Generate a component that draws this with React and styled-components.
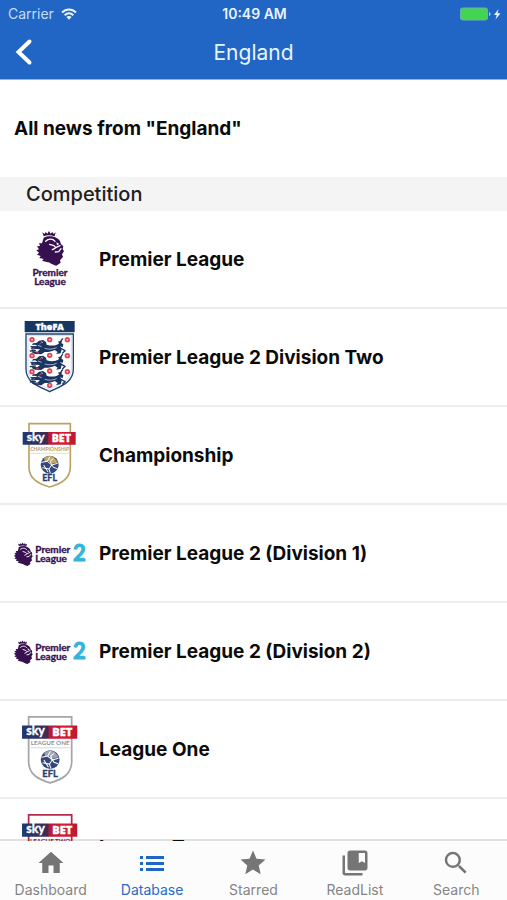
import React from "react";
import styled, { createGlobalStyle } from "styled-components";
import { MdHome, MdStar, MdCollectionsBookmark, MdSearch } from "react-icons/md";

const GlobalStyle = createGlobalStyle`
  * { box-sizing: border-box; }
  body { margin: 0; background: #fff; font-family: Inter, "Liberation Sans", sans-serif; }
`;

const Screen = styled.div`
  display: flex;
  flex-direction: column;
  height: 100vh;
  overflow: hidden;
  background: #fff;
`;

const Header = styled.header`
  flex: none;
  color: #e9f3ff;
  background: #2166c4;
  border-bottom: 1px solid #8fb6e6;
`;

const StatusBar = styled.div`
  display: grid;
  grid-template-columns: 1fr auto 1fr;
  align-items: center;
  height: 27px;
  padding: 0 6px 0 8px;
  font-size: 14px;
`;

const Carrier = styled.span`
  display: flex;
  align-items: center;
  gap: 7px;
  color: #c5dcf8;
`;

const Clock = styled.span`
  font-weight: 600;
`;

const Power = styled.span`
  display: flex;
  justify-content: flex-end;
`;

const TitleBar = styled.div`
  display: grid;
  grid-template-columns: 48px 1fr 48px;
  align-items: center;
  height: 50px;
  margin-bottom: 2px;
`;

const BackButton = styled.button`
  display: flex;
  align-items: center;
  height: 48px;
  padding: 0 0 0 14px;
  border: 0;
  background: none;
  color: #fff;
  cursor: pointer;
`;

const Title = styled.h1`
  margin: 0;
  font-size: 21px;
  font-weight: 400;
  text-align: center;
`;

const Content = styled.main`
  flex: 1;
  min-height: 0;
  overflow-y: auto;
  scrollbar-width: none;
`;

const NewsLink = styled.a`
  display: flex;
  align-items: center;
  height: 97px;
  padding: 0 14px;
  color: #0b0b0b;
  font-size: 19px;
  font-weight: 700;
  text-decoration: none;
`;

const SectionTitle = styled.h2`
  margin: 0;
  padding: 1px 26px 0;
  background: #f4f4f4;
  color: #202020;
  font-size: 20px;
  font-weight: 500;
  line-height: 33px;
`;

const List = styled.ul`
  margin: 0;
  padding: 0;
  list-style: none;
`;

const Row = styled.li`
  border-bottom: 2px solid #ececec;
`;

const RowLink = styled.a`
  display: grid;
  grid-template-columns: 72px 1fr;
  align-items: center;
  gap: 13px;
  height: 96px;
  padding: 0 14px;
  color: #0b0b0b;
  font-size: 19px;
  font-weight: 700;
  text-decoration: none;
`;

const Crest = styled.svg`
  justify-self: center;
  display: block;
`;

const TabBar = styled.nav`
  position: relative;
  flex: none;
  display: grid;
  grid-template-columns: repeat(5, 1fr);
  height: 61px;
  margin-top: -2px;
  border-top: 2px solid rgba(0, 0, 0, 0.12);
  background: #fcfcfc;
  background-clip: padding-box;
`;

const Tab = styled.a`
  display: flex;
  flex-direction: column;
  align-items: center;
  padding-top: 7px;
  color: ${(p) => (p.$active ? "#2a6bc4" : "#858585")};
  font-size: 14px;
  line-height: 20px;
  text-decoration: none;

  svg { margin-bottom: 2px; fill: ${(p) => (p.$active ? "#2166c4" : "#757575")}; }
`;

const purple = "#37104f";

function LionHead() {
  return (
    <g>
      <path
        fill={purple}
        d="M97 40l7 5 3-6 5 5 5-8 5 8 5-5 4 6 6-5-3 12c-11-4-23-4-33 0zM101 56c13-6 29-5 39 1 9 5 12 11 12 17l8 8-2 8 4 7-6 9 3 8-9 10 2 7-13 9c-13-2-17-10-29-11l-14-4 5-5-13-3 4-6-11-4 6-6-8-7 8-3-6-9 9-1-3-8 9 0z"
      />
      <path
        fill="none"
        stroke="#fff"
        strokeWidth="4"
        strokeLinecap="round"
        strokeLinejoin="round"
        d="M107 67c8-8 21-9 28 0M119 76l13 4 5 6 13-6M135 88l-8 4M153 89l-7 9-10 1"
      />
      <path fill="#fff" d="M139 70l9 5-7 4z" />
    </g>
  );
}

function PremierLeagueCrest() {
  return (
    <Crest width="72" height="72" viewBox="12 12 216 216" aria-hidden="true">
      <LionHead />
      <g fill={purple} stroke={purple} strokeWidth="1" fontFamily="Lato, sans-serif" fontWeight="700" fontSize="30" textAnchor="middle">
        <text x="120" y="172">Premier</text>
        <text x="120" y="198">League</text>
      </g>
    </Crest>
  );
}

function PremierLeagueTwoCrest() {
  return (
    <Crest width="72" height="40" viewBox="26 8 216 120" aria-hidden="true">
      <g transform="translate(-28 12) scale(0.68)">
        <LionHead />
      </g>
      <g fill={purple} stroke={purple} strokeWidth="1" fontFamily="Lato, sans-serif" fontWeight="700" fontSize="30">
        <text x="90" y="68">Premier</text>
        <text x="90" y="94">League</text>
      </g>
      <text x="203" y="93" fill="#35b4d8" stroke="#35b4d8" strokeWidth="3" fontFamily="Lato, sans-serif" fontWeight="700" fontSize="66">2</text>
    </Crest>
  );
}

function Lion({ y }) {
  return (
    <g transform={`translate(0 ${y})`}>
      <path
        fill="#1a3561"
        d="M79 2l8-7 12-2 9 6 2 8c14 5 26 3 38-3l-4-6 12-4-3 7 7 5-2 9-7-3 4 10-3 11-14 2 5-6-9-6c-10 5-22 7-30 6l-10 7-19-1-10-5 3-4 14 2 8-7-13-1-11 2-4-5 9-5 12-1-8-4-9 1 3-5 7-1z"
      />
      <path fill="none" stroke="#1a3561" strokeWidth="4" strokeLinecap="round" d="M145 7c12-2 5-15 13-17M63 13l14 1M61 26l15-2M151 17l14 8-7 7" />
      <path fill="none" stroke="#e8eef6" strokeWidth="2" d="M104 18c13 4 24 3 36-2M84 9l11 4M93-2l6 3" />
      <path fill="none" stroke="#e13d50" strokeWidth="3" d="M93 0l-4 6M79 31l7 1M74 17l-6 1" />
    </g>
  );
}

const ROSES = [
  [66, 76], [119, 76], [172, 76],
  [66, 124], [119, 123], [172, 124],
  [66, 172], [119, 170], [172, 172],
  [119, 213],
];

function FootballAssociationCrest() {
  return (
    <Crest width="72" height="78" viewBox="12 11 216 234" aria-hidden="true">
      <path fill="#fff" stroke="#1c416f" strokeWidth="4" d="M48 59H190V164C190 205 151 216 119 232C87 216 48 205 48 164Z" />
      <path fill="none" stroke="#b9c8da" strokeWidth="2" d="M54 64H184V164C184 198 148 210 119 225C90 210 54 198 54 164Z" />
      <path fill="#173763" d="M44 20h150v34H44z" />
      <text x="119" y="46" fill="#fff" stroke="#fff" strokeWidth="1" textAnchor="middle" fontFamily="Open Sans, sans-serif" fontWeight="800" fontSize="27">TheFA</text>
      {[84, 131, 177].map((y) => <Lion key={y} y={y} />)}
      {ROSES.map(([x, y]) => (
        <g key={`${x}-${y}`}>
          <circle cx={x} cy={y} r="8" fill="#de4050" />
          <circle cx={x} cy={y} r="3" fill="#f7c9cb" />
        </g>
      ))}
    </Crest>
  );
}

function SkyBetCrest({ id, size, outline, ink, caption, captionSize, globe }) {
  return (
    <Crest width={size} height={size} viewBox="12 13 216 216" aria-hidden="true">
      <defs>
        <linearGradient id={`${id}-band`}>
          <stop offset="0" stopColor="#20396f" />
          <stop offset="0.3" stopColor="#303061" />
          <stop offset="0.47" stopColor="#442950" />
          <stop offset="0.49" stopColor="#b81835" />
          <stop offset="0.75" stopColor="#d81c31" />
          <stop offset="1" stopColor="#bd1731" />
        </linearGradient>
      </defs>
      <path fill="#fff" stroke={outline} strokeWidth="5" d="M57 27H181V156C181 194 151 208 119 217C87 208 57 194 57 156Z" />
      <path fill={`url(#${id}-band)`} d="M38 52h159v38H38z" />
      <g fill="#fff" stroke="#fff" strokeWidth="1" textAnchor="middle">
        <text x="77" y="80" fontFamily="Lato, sans-serif" fontWeight="700" fontSize="36">sky</text>
        <text x="154" y="83" fontFamily="Open Sans, sans-serif" fontWeight="800" fontSize="32">BET</text>
      </g>
      <text x="119" y="109" fill={ink} textAnchor="middle" fontFamily="Lato, sans-serif" fontWeight="700" fontSize={captionSize}>{caption}</text>
      <path stroke={ink} strokeWidth="1" d="M62 116h114" />
      <circle cx="119" cy="150" r="27" fill="#344879" />
      <path fill={globe} d="M102 132c8-10 24-11 33 0l9 11-16 4-13-9-10 4z" />
      <path fill="none" stroke="#fff" strokeWidth="3" d="M94 143l18-3 13 11-8 12-20-4M112 140l8-14M125 151l18-5M117 163l4 13M130 132l-10 8 10 18 12 4M101 151l13 21" />
      <text x="119" y="199" fill="#273d70" stroke="#273d70" strokeWidth="1" textAnchor="middle" fontFamily="Lato, sans-serif" fontWeight="700" fontSize="27">EFL</text>
    </Crest>
  );
}

const COMPETITIONS = [
  { name: "Premier League", crest: <PremierLeagueCrest /> },
  { name: "Premier League 2 Division Two", crest: <FootballAssociationCrest /> },
  {
    name: "Championship",
    crest: <SkyBetCrest id="championship" size={72} outline="#b9a263" ink="#b29a5c" caption="CHAMPIONSHIP" captionSize={15} globe="#c3aa62" />,
  },
  { name: "Premier League 2 (Division 1)", crest: <PremierLeagueTwoCrest /> },
  { name: "Premier League 2 (Division 2)", crest: <PremierLeagueTwoCrest /> },
  {
    name: "League One",
    crest: <SkyBetCrest id="league-one" size={75} outline="#a3a5a9" ink="#8d8f94" caption="LEAGUE ONE" captionSize={18} globe="#9da2ad" />,
  },
  {
    name: "League Two",
    crest: <SkyBetCrest id="league-two" size={75} outline="#b52b4c" ink="#a51f42" caption="LEAGUE TWO" captionSize={18} globe="#b52b4c" />,
  },
];

function ListIcon() {
  return (
    <svg width="30" height="30" viewBox="0 0 30 30" aria-hidden="true">
      <path d="M3 8h3v3H3zM3 14h3v3H3zM3 20h3v3H3zM9 8h18v3H9zM9 14h18v3H9zM9 20h18v3H9z" />
    </svg>
  );
}

const TABS = [
  { label: "Dashboard", Icon: MdHome },
  { label: "Database", Icon: ListIcon, active: true },
  { label: "Starred", Icon: MdStar },
  { label: "ReadList", Icon: MdCollectionsBookmark },
  { label: "Search", Icon: MdSearch },
];

export default function App() {
  return (
    <Screen>
      <GlobalStyle />
      <Header>
        <StatusBar>
          <Carrier>
            Carrier
            <svg width="16" height="12" viewBox="0 0 16 12" fill="none" stroke="#e9f3ff" strokeWidth="2" aria-hidden="true">
              <path d="M1 4.5C5 .4 11 .4 15 4.5M3.7 7.2c2.5-2.5 6.1-2.5 8.6 0" />
              <path fill="#e9f3ff" stroke="none" d="M5.4 9c1.5-1.4 3.7-1.4 5.2 0L8 11.7z" />
            </svg>
          </Carrier>
          <Clock>10:49 AM</Clock>
          <Power>
            <svg width="41" height="14" viewBox="0 0 41 14" role="img" aria-label="Battery charging">
              <rect x="0.5" y="1" width="27" height="12" rx="2" fill="#43d551" stroke="#6bb0a5" />
              <path fill="#9bd8c4" d="M29 5c2 0 2 4 0 4z" />
              <path fill="#e9f3ff" d="M38.500 2L34 8h2.700L35.500 12.500 40.500 6.200h-3z" />
            </svg>
          </Power>
        </StatusBar>
        <TitleBar>
          <BackButton type="button" aria-label="Back">
            <svg width="19" height="28" viewBox="0 0 19 28" fill="none" stroke="currentColor" strokeWidth="4" strokeLinecap="round" aria-hidden="true">
              <path d="M15.500 3.500L4.500 14l11 10.500" />
            </svg>
          </BackButton>
          <Title>England</Title>
        </TitleBar>
      </Header>
      <Content>
        <NewsLink href="#news">All news from "England"</NewsLink>
        <SectionTitle>Competition</SectionTitle>
        <List>
          {COMPETITIONS.map(({ name, crest }) => (
            <Row key={name}>
              <RowLink href="#competition">
                {crest}
                <span>{name}</span>
              </RowLink>
            </Row>
          ))}
        </List>
      </Content>
      <TabBar>
        {TABS.map(({ label, Icon, active }) => (
          <Tab key={label} href={`#${label.toLowerCase()}`} $active={active} aria-current={active ? "page" : undefined}>
            <Icon size={30} aria-hidden="true" />
            {label}
          </Tab>
        ))}
      </TabBar>
    </Screen>
  );
}
